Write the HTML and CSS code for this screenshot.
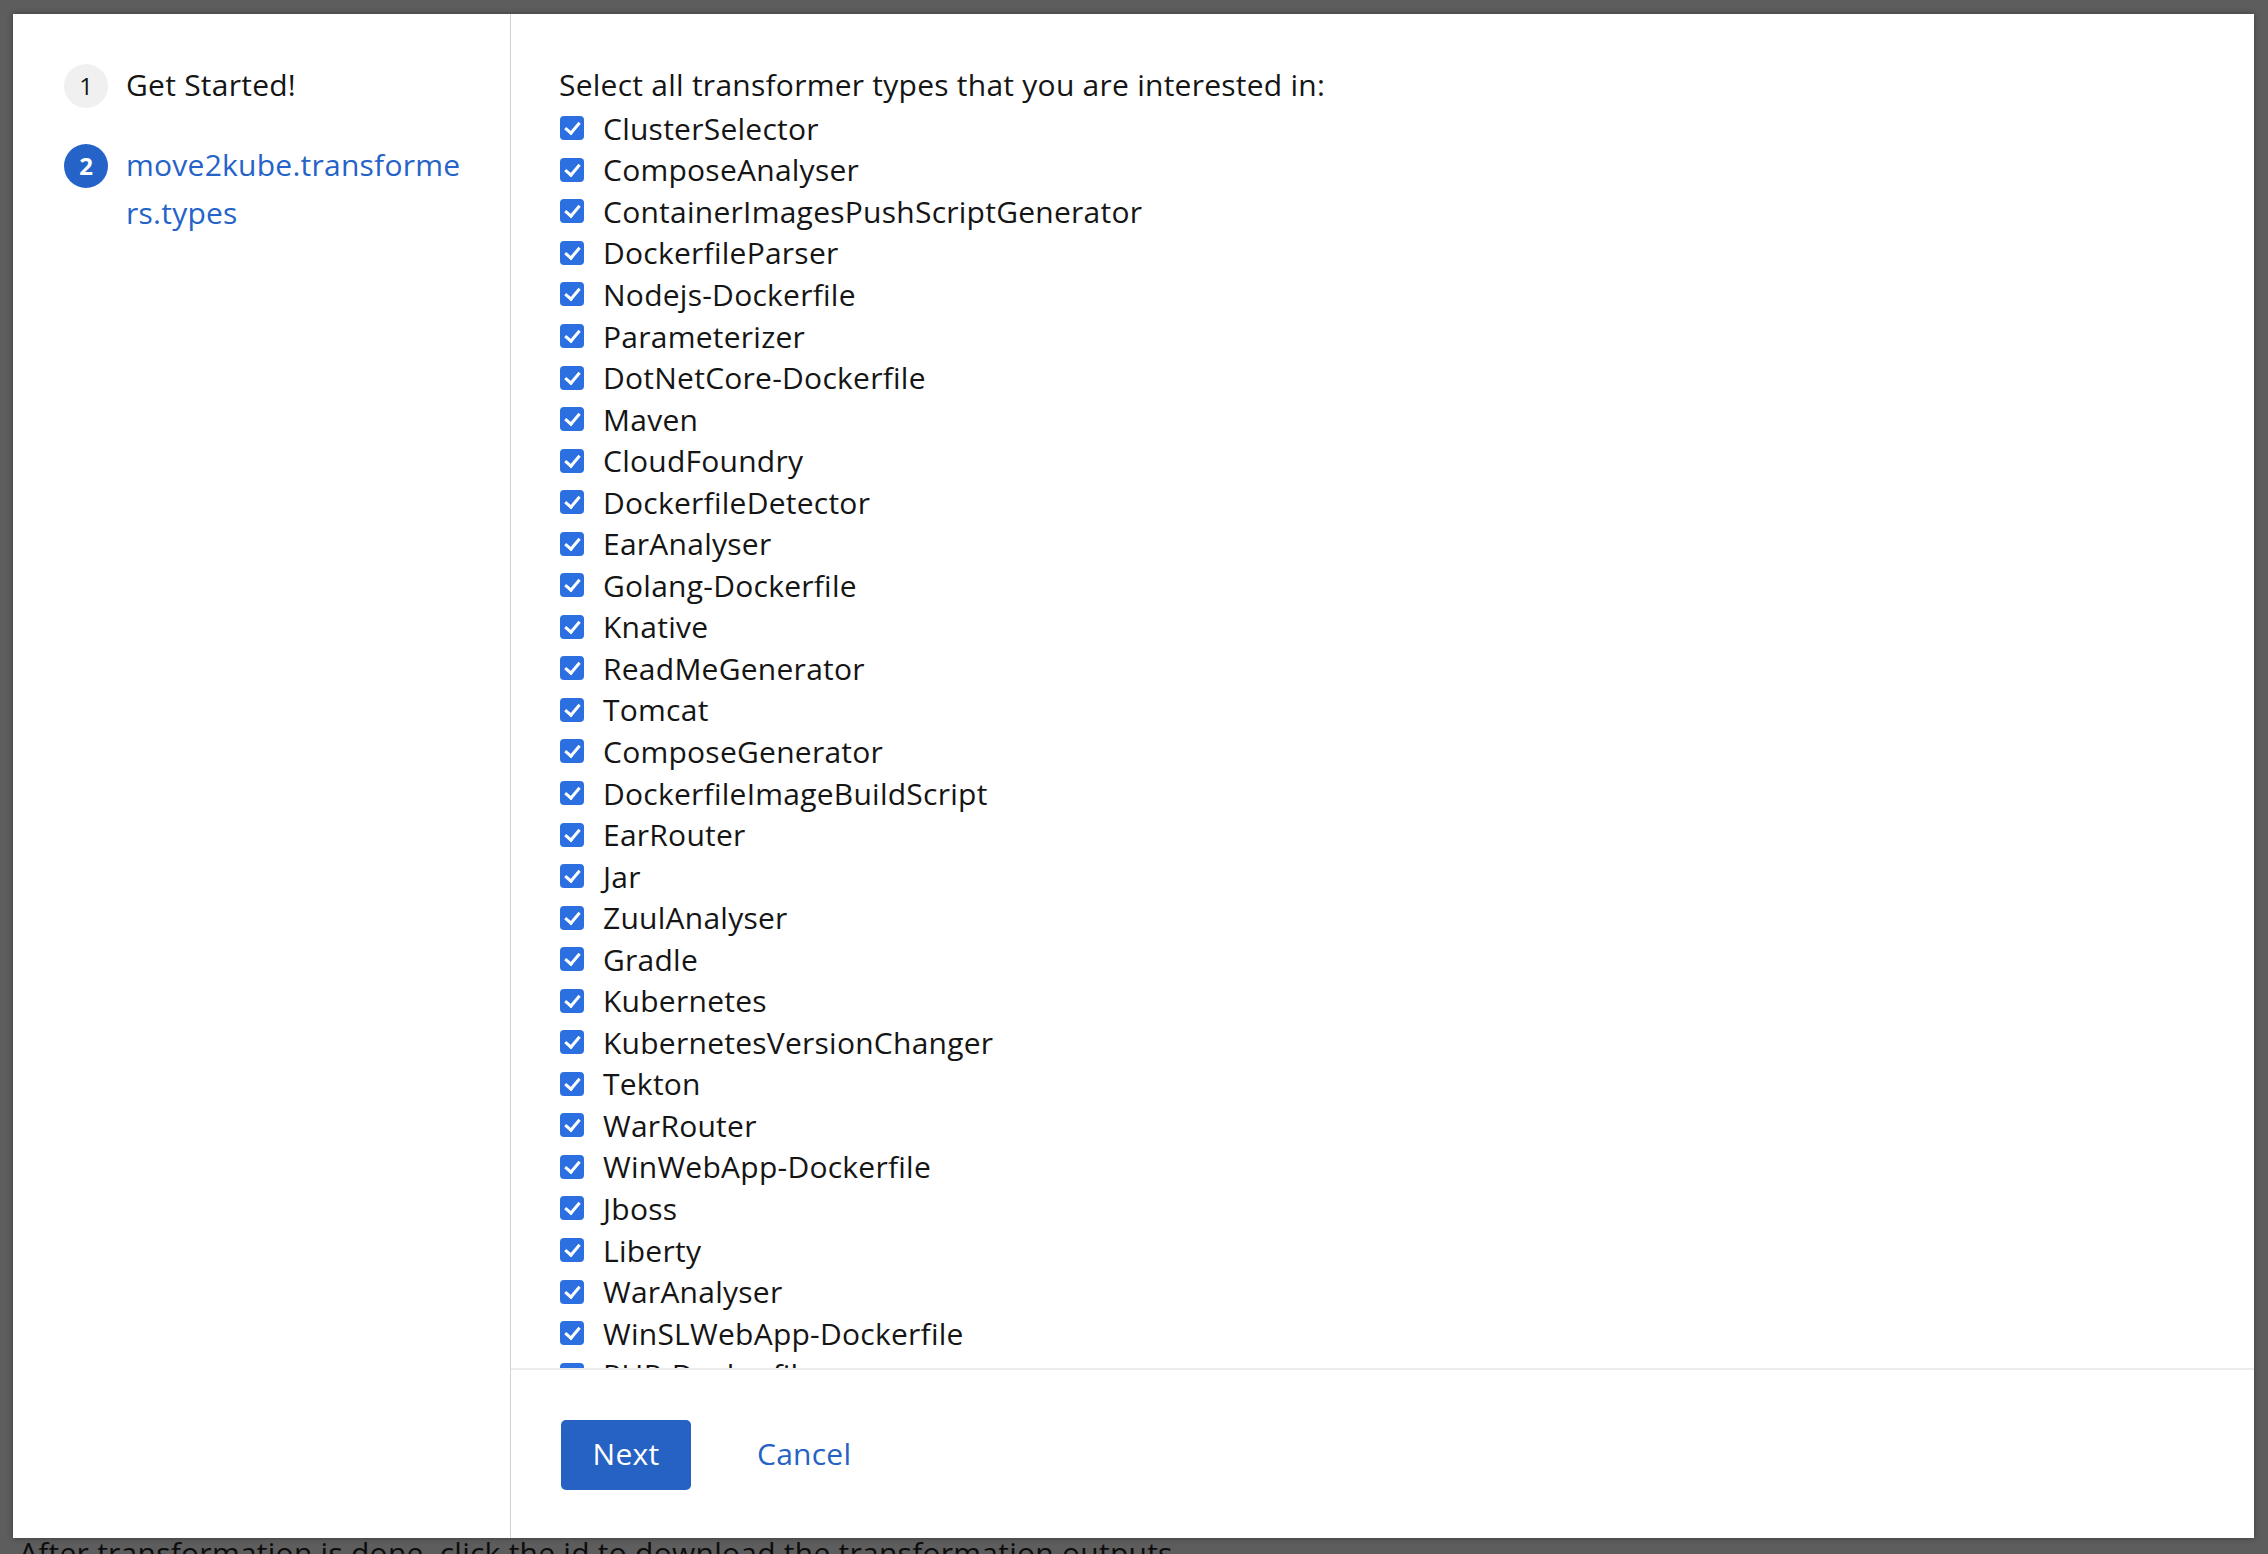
FILE: index.html
```html
<!DOCTYPE html>
<html lang="en">
<head>
<meta charset="utf-8">
<title>Move2Kube wizard</title>
<link rel="stylesheet" href="styles.css">
</head>
<body>
<div class="modal">
  <nav class="nav">
    <div class="step">
      <span class="num">1</span>
      <span class="label">Get Started!</span>
    </div>
    <div class="step current">
      <span class="num">2</span>
      <span class="label">move2kube.transforme<br>rs.types</span>
    </div>
  </nav>
  <section class="main">
    <div class="body">
      <div class="question">Select all transformer types that you are interested in:</div>
      <ul class="list">
        <li><span class="cb"></span>ClusterSelector</li>
        <li><span class="cb"></span>ComposeAnalyser</li>
        <li><span class="cb"></span>ContainerImagesPushScriptGenerator</li>
        <li><span class="cb"></span>DockerfileParser</li>
        <li><span class="cb"></span>Nodejs-Dockerfile</li>
        <li><span class="cb"></span>Parameterizer</li>
        <li><span class="cb"></span>DotNetCore-Dockerfile</li>
        <li><span class="cb"></span>Maven</li>
        <li><span class="cb"></span>CloudFoundry</li>
        <li><span class="cb"></span>DockerfileDetector</li>
        <li><span class="cb"></span>EarAnalyser</li>
        <li><span class="cb"></span>Golang-Dockerfile</li>
        <li><span class="cb"></span>Knative</li>
        <li><span class="cb"></span>ReadMeGenerator</li>
        <li><span class="cb"></span>Tomcat</li>
        <li><span class="cb"></span>ComposeGenerator</li>
        <li><span class="cb"></span>DockerfileImageBuildScript</li>
        <li><span class="cb"></span>EarRouter</li>
        <li><span class="cb"></span>Jar</li>
        <li><span class="cb"></span>ZuulAnalyser</li>
        <li><span class="cb"></span>Gradle</li>
        <li><span class="cb"></span>Kubernetes</li>
        <li><span class="cb"></span>KubernetesVersionChanger</li>
        <li><span class="cb"></span>Tekton</li>
        <li><span class="cb"></span>WarRouter</li>
        <li><span class="cb"></span>WinWebApp-Dockerfile</li>
        <li><span class="cb"></span>Jboss</li>
        <li><span class="cb"></span>Liberty</li>
        <li><span class="cb"></span>WarAnalyser</li>
        <li><span class="cb"></span>WinSLWebApp-Dockerfile</li>
        <li><span class="cb"></span>PHP-Dockerfile</li>
        <li><span class="cb"></span>Python-Dockerfile</li>
      </ul>
    </div>
    <footer class="footer">
      <button class="btn primary">Next</button>
      <button class="btn link">Cancel</button>
    </footer>
  </section>
</div>
<p class="page-text">After transformation is done, click the id to download the transformation outputs.</p>
</body>
</html>
```

FILE: styles.css
```css
html, body {
  margin: 0;
  padding: 0;
}
body {
  background: #5d5d5d;
  font-family: "Open Sans", Lato, sans-serif;
  color: #151515;
  overflow: hidden;
  height: 1554px;
  letter-spacing: 0.25px;
}
.modal {
  margin: 14px 0 0 13px;
  width: 2241px;
  height: 1524px;
  background: #fff;
  display: flex;
  box-shadow: 0 0 6px rgba(0,0,0,0.35);
}
.nav {
  width: 498px;
  border-right: 1px solid #d2d2d2;
  padding: 50px 0 0 51px;
  box-sizing: border-box;
  flex: none;
}
.step {
  display: flex;
  align-items: flex-start;
  font-size: 30px;
  line-height: 48px;
  margin-bottom: 35px;
}
.num {
  width: 44px;
  height: 44px;
  border-radius: 50%;
  background: #f0f0f0;
  color: #151515;
  display: flex;
  align-items: center;
  justify-content: center;
  font-size: 24px;
  letter-spacing: 0;
  flex: none;
  margin: 0 18px 0 0;
}
.step .label {
  margin-top: -3px;
}
.step.current .num {
  background: #2563c9;
  color: #fff;
  font-weight: 700;
}
.step.current .label {
  color: #2563c9;
}
.main {
  flex: 1;
  display: flex;
  flex-direction: column;
  min-width: 0;
}
.body {
  height: 1356px;
  overflow: hidden;
  padding: 50px 0 0 48px;
  box-sizing: border-box;
  border-bottom: 2px solid #ececec;
}
.question {
  font-size: 30px;
  line-height: 41.5px;
  margin-bottom: 2px;
}
.list {
  list-style: none;
  margin: 0;
  padding: 0;
}
.list li {
  display: flex;
  align-items: center;
  height: 41.55px;
  font-size: 30px;
  color: #151515;
}
.cb {
  width: 24px;
  height: 24px;
  border-radius: 4px;
  background: #2b6fe0;
  margin: 0 19px 0 1px;
  position: relative;
  flex: none;
}
.cb::after {
  content: "";
  position: absolute;
  left: 8px;
  top: 3px;
  width: 6px;
  height: 12px;
  border: solid #fff;
  border-width: 0 3px 3px 0;
  transform: rotate(40deg);
}
.footer {
  flex: 1;
  display: flex;
  align-items: flex-start;
  padding: 50px 0 0 50px;
  gap: 40px;
}
.btn {
  font-family: inherit;
  font-size: 30px;
  letter-spacing: 0.25px;
  border: none;
  cursor: pointer;
  padding-bottom: 4px;
}
.btn.primary {
  width: 130px;
  height: 70px;
  background: #2562c4;
  color: #fff;
  border-radius: 5px;
  padding-left: 0;
  padding-right: 0;
}
.btn.link {
  height: 70px;
  background: none;
  color: #2562c4;
  padding-left: 26px;
  padding-right: 25px;
}
.page-text {
  margin: 0;
  padding: 0 0 0 19px;
  font-size: 30px;
  line-height: 30px;
  color: #0d0d0d;
}
```
